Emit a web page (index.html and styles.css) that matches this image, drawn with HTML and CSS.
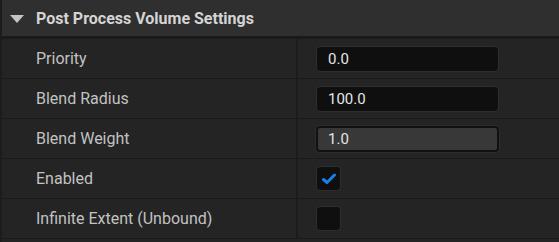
FILE: index.html
```html
<!DOCTYPE html>
<html lang="en">
<head>
    <meta charset="UTF-8">
    <title>Post Process Volume Settings</title>
    <link rel="stylesheet" href="styles.css">
</head>
<body>

<div class="panel">
    <div class="category">
        <span class="arrow"></span>
        <span class="category-title">Post Process Volume Settings</span>
    </div>

    <div class="row">
        <div class="name">Priority</div>
        <div class="value"><div class="field">0.0</div></div>
    </div>
    <div class="row">
        <div class="name">Blend Radius</div>
        <div class="value"><div class="field">100.0</div></div>
    </div>
    <div class="row">
        <div class="name">Blend Weight</div>
        <div class="value"><div class="field field-active">1.0</div></div>
    </div>
    <div class="row">
        <div class="name">Enabled</div>
        <div class="value">
            <div class="check">
                <svg width="14" height="12" viewBox="0 0 14 12">
                    <path d="M1.5 6.5 L5 9.5 L12.5 2" fill="none" stroke="#1a7ee6" stroke-width="3" stroke-linecap="round" stroke-linejoin="round"/>
                </svg>
            </div>
        </div>
    </div>
    <div class="row">
        <div class="name">Infinite Extent (Unbound)</div>
        <div class="value"><div class="check"></div></div>
    </div>
</div>

</body>
</html>
```

FILE: styles.css
```css
body {
    margin: 0;
    background: #242424;
    font-family: 'Roboto', sans-serif;
    font-size: 16px;
}

.panel {
    width: 559px;
    height: 242px;
    background: #242424;
    border-left: 2px solid #1c1c1c;
    box-sizing: border-box;
}

/* Category header */
.category {
    height: 36px;
    display: flex;
    align-items: center;
    background: #2f2f2f;
    border-bottom: 3px solid #1a1a1a;
    padding-left: 8px;
}

.arrow {
    width: 0;
    height: 0;
    border-left: 7px solid transparent;
    border-right: 7px solid transparent;
    border-top: 8px solid #c4c4c4;
    margin-right: 12px;
    margin-top: 1px;
}

.category-title {
    color: #d4d4d4;
    font-weight: bold;
    font-size: 16px;
}

/* Property rows */
.row {
    height: 39px;
    display: flex;
    border-bottom: 1px solid #1a1a1a;
}

.name {
    width: 260px;
    padding-left: 34px;
    display: flex;
    align-items: center;
    color: #c2c2c2;
    border-right: 2px solid #1c1c1c;
}

.value {
    flex: 1;
    display: flex;
    align-items: center;
    padding-left: 18px;
}

.field {
    width: 183px;
    height: 26px;
    box-sizing: border-box;
    background: #0f0f0f;
    border: 1px solid #2e2e2e;
    border-radius: 4px;
    color: #e6e6e6;
    font-size: 15px;
    padding-left: 11px;
    display: flex;
    align-items: center;
}

.field-active {
    background: #383838;
    border: 2px solid #111;
    box-shadow: 0 0 0 1px #2e2e2e;
    padding-left: 10px;
}

.check {
    width: 25px;
    height: 25px;
    box-sizing: border-box;
    background: #0f0f0f;
    border: 1px solid #2e2e2e;
    border-radius: 4px;
    display: flex;
    align-items: center;
    justify-content: center;
}
```
